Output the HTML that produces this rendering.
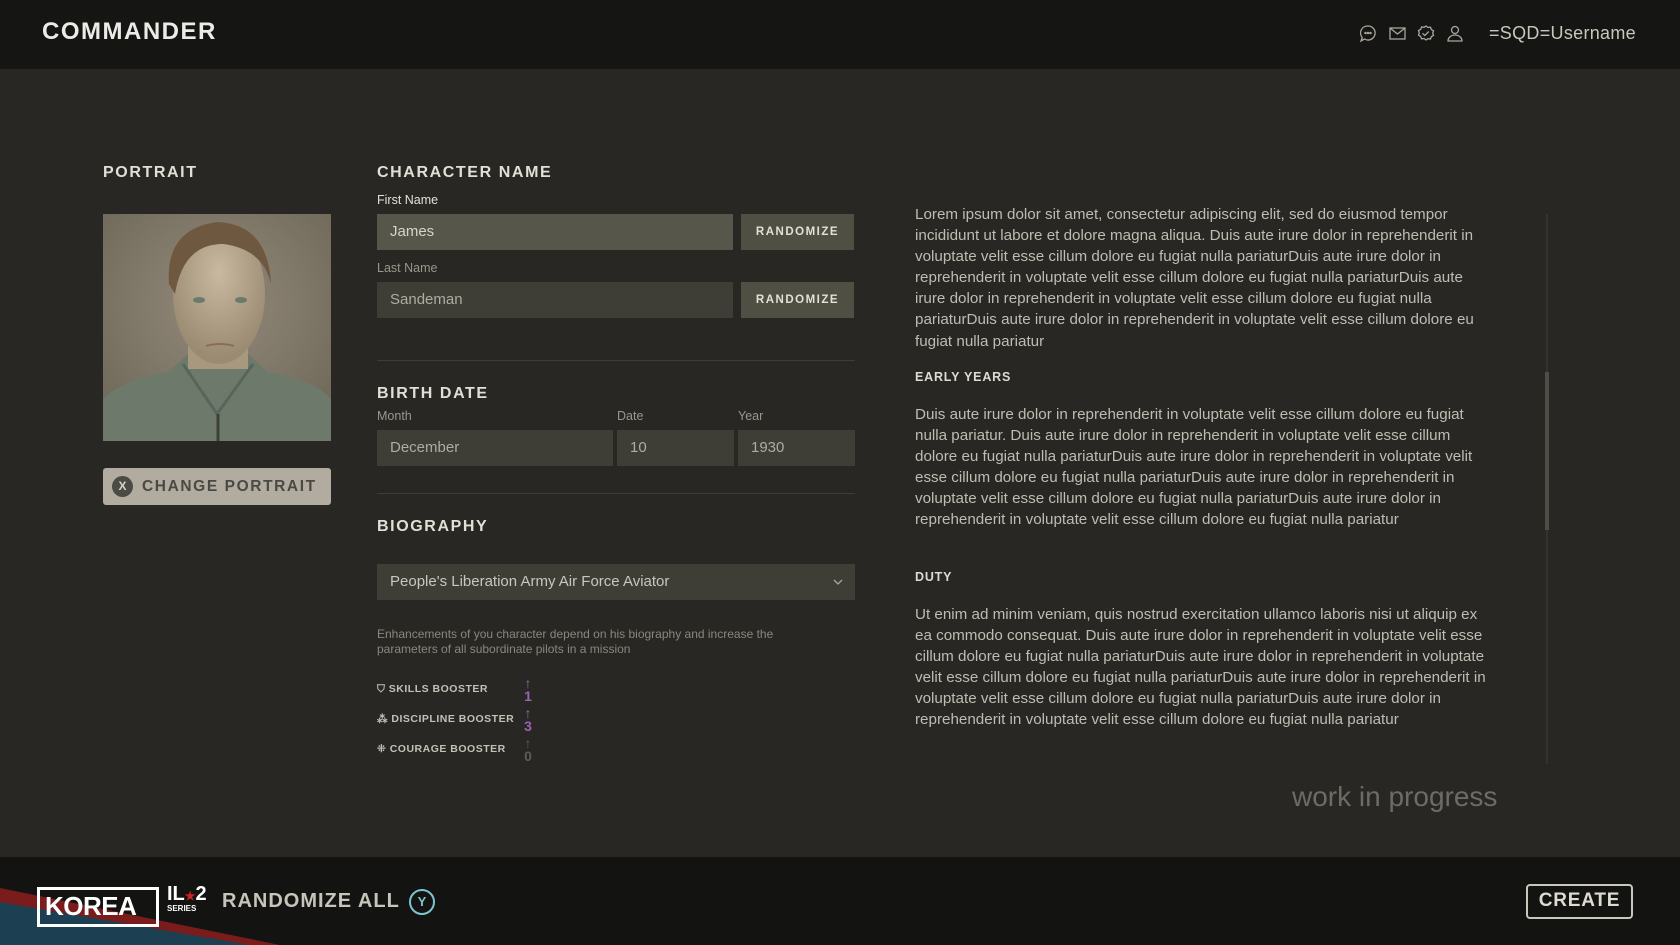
<!DOCTYPE html>
<html><head><meta charset="utf-8"><style>
*{margin:0;padding:0;box-sizing:border-box}
body{width:1680px;height:945px;overflow:hidden;background:#282723;font-family:"Liberation Sans",sans-serif;color:#d8d5cc;position:relative}
.a{position:absolute}
.hdr{left:0;top:0;width:1680px;height:69px;background:#151513}
.h{font-weight:bold;letter-spacing:1.6px;color:#e2dfd6;font-size:16px}
.lbl{font-size:12.5px;color:#bcb8ad}
.inp{background:#4a4a3e;height:36px;font-size:15px;color:#d8d5c8;padding:0 13px;line-height:36px}
.btn{background:#4f4f43;height:36px;font-size:11.5px;font-weight:bold;letter-spacing:1.5px;color:#e4e1d6;text-align:center;line-height:36px;width:113px;left:741px}
.div{height:1px;background:#3e3d37;left:377px;width:478px}
.txt{left:915px;width:572px;font-size:15.2px;line-height:21.1px;color:#bfbcb2}
.sub{left:915px;font-size:12.5px;font-weight:bold;letter-spacing:.8px;color:#dedbd2}
.bst{left:377px;font-size:10.5px;font-weight:bold;letter-spacing:.5px;color:#c3c0b6}
.num{left:522px;font-size:14px;font-weight:bold;color:#9a62b0;line-height:13px;text-align:center;width:12px}
</style></head><body>
<div class="a hdr"></div>
<div class="a" style="left:42px;top:18px;font-size:24px;font-weight:bold;letter-spacing:1.5px;color:#ecebe5">COMMANDER</div>
<svg class="a" style="left:1359px;top:24px" width="110" height="20" viewBox="0 0 110 20" fill="none" stroke="#a9a69c" stroke-width="1.3">
<path d="M9 2a7 7 0 1 1-3.5 13L2 17l1.2-3.5A7 7 0 0 1 9 2z"/><circle cx="6.5" cy="9" r=".6" fill="#a9a69c"/><circle cx="9" cy="9" r=".6" fill="#a9a69c"/><circle cx="11.5" cy="9" r=".6" fill="#a9a69c"/>
<rect x="31" y="4" width="15" height="11"/><path d="M31 4l7.5 6 7.5-6"/>
<path d="M67 2l2 1.5 2.5-.3.8 2.3 2.2 1.3-.8 2.3.8 2.3-2.2 1.3-.8 2.3-2.5-.3L67 16l-2-1.5-2.5.3-.8-2.3-2.2-1.3.8-2.3-.8-2.3 2.2-1.3.8-2.3 2.5.3z"/><path d="M63.5 9.3l2.3 2.2 4-4"/>
<circle cx="96" cy="6" r="3.5"/><path d="M89 17a7 6 0 0 1 14 0z"/>
</svg>
<div class="a" style="left:1489px;top:23px;font-size:18px;color:#c9c6bc;letter-spacing:.3px">=SQD=Username</div>

<div class="a h" style="left:103px;top:164px">PORTRAIT</div>
<svg class="a" style="left:103px;top:214px" width="228" height="227" viewBox="0 0 228 227">
<defs><radialGradient id="bg" cx="50%" cy="40%" r="70%"><stop offset="0" stop-color="#93897a"/><stop offset="1" stop-color="#6e6859"/></radialGradient>
<radialGradient id="fc" cx="50%" cy="35%" r="60%"><stop offset="0" stop-color="#c9b9a0"/><stop offset="1" stop-color="#9b8b73"/></radialGradient></defs>
<rect width="228" height="227" fill="url(#bg)"/>
<path d="M0 185 Q20 165 65 158 L85 140 L145 140 L165 158 Q210 165 228 185 L228 227 L0 227z" fill="#6d7a6b"/>
<path d="M80 150 L114 200 L150 150" fill="none" stroke="#59655a" stroke-width="3"/>
<rect x="85" y="110" width="60" height="45" fill="#a8987e"/>
<ellipse cx="116" cy="80" rx="46" ry="70" fill="url(#fc)"/>
<path d="M66 70 Q62 15 114 8 Q165 10 168 70 Q160 35 120 30 Q80 30 72 80z" fill="#6e5840"/>
<ellipse cx="96" cy="86" rx="6" ry="3" fill="#6a7a6c"/><ellipse cx="138" cy="86" rx="6" ry="3" fill="#6a7a6c"/>
<path d="M103 132 Q117 128 131 132" stroke="#8a6e5c" stroke-width="2" fill="none"/>
<line x1="115" y1="200" x2="115" y2="227" stroke="#3e4038" stroke-width="3"/>
</svg>
<div class="a" style="left:103px;top:468px;width:228px;height:37px;background:#b1ac9f;border-radius:3px"></div>
<div class="a" style="left:112px;top:476px;width:21px;height:21px;border-radius:50%;background:#4b4a44;color:#d7d3c8;font-size:12px;font-weight:bold;text-align:center;line-height:21px">X</div>
<div class="a" style="left:142px;top:478px;font-size:15.5px;font-weight:bold;letter-spacing:1.6px;color:#4a4943">CHANGE PORTRAIT</div>

<div class="a h" style="left:377px;top:164px">CHARACTER NAME</div>
<div class="a lbl" style="left:377px;top:193px;color:#e3e0d7">First Name</div>
<div class="a inp" style="left:377px;top:214px;width:356px;background:#56564a">James</div>
<div class="a btn" style="top:214px">RANDOMIZE</div>
<div class="a lbl" style="left:377px;top:261px;color:#99968c">Last Name</div>
<div class="a inp" style="left:377px;top:282px;width:356px;background:#3f3e36;color:#aeab9f">Sandeman</div>
<div class="a btn" style="top:282px">RANDOMIZE</div>
<div class="a div" style="top:360px"></div>

<div class="a h" style="left:377px;top:385px">BIRTH DATE</div>
<div class="a lbl" style="left:377px;top:409px;color:#99968c">Month</div>
<div class="a lbl" style="left:617px;top:409px;color:#99968c">Date</div>
<div class="a lbl" style="left:738px;top:409px;color:#99968c">Year</div>
<div class="a inp" style="left:377px;top:430px;width:236px;background:#3f3e36;color:#aeab9f">December</div>
<div class="a inp" style="left:617px;top:430px;width:117px;background:#3f3e36;color:#aeab9f">10</div>
<div class="a inp" style="left:738px;top:430px;width:117px;background:#3f3e36;color:#aeab9f">1930</div>
<div class="a div" style="top:493px"></div>

<div class="a h" style="left:377px;top:518px">BIOGRAPHY</div>
<div class="a inp" style="left:377px;top:564px;width:478px;background:#3f3e36;color:#c9c6bb">People's Liberation Army Air Force Aviator</div>
<svg class="a" style="left:832px;top:577px" width="12" height="10"><path d="M2 3l4 4 4-4" stroke="#a9a69c" fill="none" stroke-width="1.3"/></svg>
<div class="a" style="left:377px;top:627px;font-size:12px;line-height:14.5px;color:#8a877d">Enhancements of you character depend on his biography and increase the<br>parameters of all subordinate pilots in a mission</div>
<div class="a bst" style="top:683px">⛉ SKILLS BOOSTER</div>
<div class="a bst" style="top:713px">⁂ DISCIPLINE BOOSTER</div>
<div class="a bst" style="top:743px">⁜ COURAGE BOOSTER</div>
<div class="a num" style="top:677px">↑<br>1</div>
<div class="a num" style="top:707px">↑<br>3</div>
<div class="a num" style="top:737px;color:#5e5c55">↑<br>0</div>

<div class="a txt" style="top:204px">Lorem ipsum dolor sit amet, consectetur adipiscing elit, sed do eiusmod tempor incididunt ut labore et dolore magna aliqua. Duis aute irure dolor in reprehenderit in voluptate velit esse cillum dolore eu fugiat nulla pariaturDuis aute irure dolor in reprehenderit in voluptate velit esse cillum dolore eu fugiat nulla pariaturDuis aute irure dolor in reprehenderit in voluptate velit esse cillum dolore eu fugiat nulla pariaturDuis aute irure dolor in reprehenderit in voluptate velit esse cillum dolore eu fugiat nulla pariatur</div>
<div class="a sub" style="top:370px">EARLY YEARS</div>
<div class="a txt" style="top:404px">Duis aute irure dolor in reprehenderit in voluptate velit esse cillum dolore eu fugiat nulla pariatur. Duis aute irure dolor in reprehenderit in voluptate velit esse cillum dolore eu fugiat nulla pariaturDuis aute irure dolor in reprehenderit in voluptate velit esse cillum dolore eu fugiat nulla pariaturDuis aute irure dolor in reprehenderit in voluptate velit esse cillum dolore eu fugiat nulla pariaturDuis aute irure dolor in reprehenderit in voluptate velit esse cillum dolore eu fugiat nulla pariatur</div>
<div class="a sub" style="top:570px">DUTY</div>
<div class="a txt" style="top:604px">Ut enim ad minim veniam, quis nostrud exercitation ullamco laboris nisi ut aliquip ex ea commodo consequat. Duis aute irure dolor in reprehenderit in voluptate velit esse cillum dolore eu fugiat nulla pariaturDuis aute irure dolor in reprehenderit in voluptate velit esse cillum dolore eu fugiat nulla pariaturDuis aute irure dolor in reprehenderit in voluptate velit esse cillum dolore eu fugiat nulla pariaturDuis aute irure dolor in reprehenderit in voluptate velit esse cillum dolore eu fugiat nulla pariatur</div>
<div class="a" style="left:1546px;top:214px;width:2px;height:550px;background:#34332e"></div>
<div class="a" style="left:1545px;top:372px;width:4px;height:158px;background:#4e4d46"></div>
<div class="a" style="left:1292px;top:781px;font-size:28px;color:#6d6b64">work in progress</div>

<div class="a" style="left:0;top:857px;width:1680px;height:88px;background:#131311"></div>
<svg class="a" style="left:0;top:880px" width="300" height="65"><path d="M0 8 L280 65 L0 65z" fill="#7a1c1c"/><path d="M0 22 L250 65 L0 65z" fill="#1d3f52"/></svg>
<div class="a" style="left:37px;top:887px;width:122px;height:40px;border:3px solid #fff"></div>
<div class="a" style="left:45px;top:891px;font-size:26px;font-weight:bold;color:#fff;letter-spacing:-.5px">KOREA</div>
<div class="a" style="left:167px;top:884px;font-size:20px;font-weight:bold;color:#fff;line-height:20px">IL<span style="color:#d02020;font-size:12px">★</span>2</div>
<div class="a" style="left:167px;top:904px;font-size:8px;font-weight:bold;color:#fff">SERIES</div>
<div class="a" style="left:222px;top:890px;font-size:20px;font-weight:bold;letter-spacing:1px;color:#c7c4ba">RANDOMIZE ALL</div>
<div class="a" style="left:409px;top:889px;width:26px;height:26px;border:2.5px solid #7cc4cf;border-radius:50%;color:#7cc4cf;font-size:13px;font-weight:bold;text-align:center;line-height:21px">Y</div>
<div class="a" style="left:1526px;top:884px;width:107px;height:35px;border:2.5px solid #c9c6bc;border-radius:4px;font-size:19px;font-weight:bold;letter-spacing:.8px;color:#dedbd2;text-align:center;line-height:30px">CREATE</div>
</body></html>
